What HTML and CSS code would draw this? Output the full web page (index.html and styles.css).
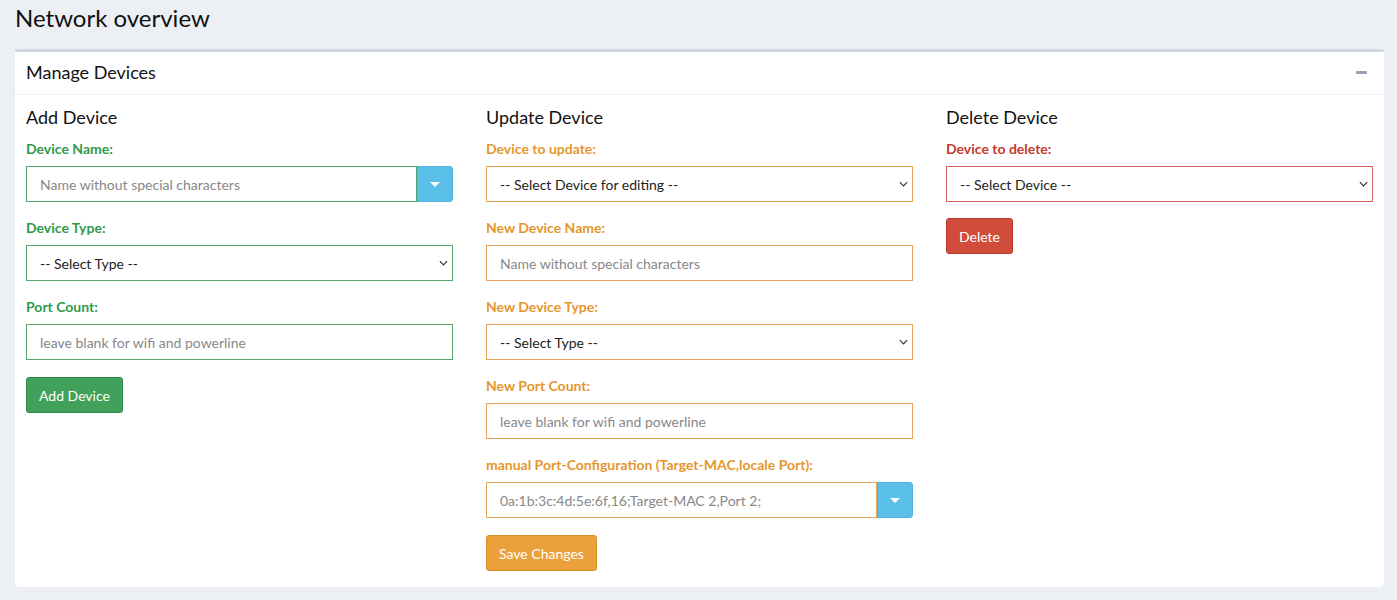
FILE: index.html
```html
<!DOCTYPE html>
<html>
<head>
<meta charset="utf-8">
<link rel="stylesheet" href="styles.css">
</head>
<body>
<div class="content">
  <h1 class="page-title">Network overview</h1>
  <div class="box">
    <div class="box-header">
      <span class="box-title">Manage Devices</span>
      <span class="collapse-btn"></span>
    </div>
    <div class="box-body">
      <div class="col col-success">
        <h3>Add Device</h3>
        <div class="form-group">
          <label>Device Name:</label>
          <div class="input-group">
            <input class="form-control" type="text" placeholder="Name without special characters">
            <span class="addon"><span class="caret"></span></span>
          </div>
        </div>
        <div class="form-group">
          <label>Device Type:</label>
          <select class="form-control"><option>-- Select Type --</option></select>
        </div>
        <div class="form-group">
          <label>Port Count:</label>
          <input class="form-control" type="text" placeholder="leave blank for wifi and powerline">
        </div>
        <button class="btn btn-success">Add Device</button>
      </div>
      <div class="col col-warning">
        <h3>Update Device</h3>
        <div class="form-group">
          <label>Device to update:</label>
          <select class="form-control"><option>-- Select Device for editing --</option></select>
        </div>
        <div class="form-group">
          <label>New Device Name:</label>
          <input class="form-control" type="text" placeholder="Name without special characters">
        </div>
        <div class="form-group">
          <label>New Device Type:</label>
          <select class="form-control"><option>-- Select Type --</option></select>
        </div>
        <div class="form-group">
          <label>New Port Count:</label>
          <input class="form-control" type="text" placeholder="leave blank for wifi and powerline">
        </div>
        <div class="form-group form-group-last">
          <label>manual Port-Configuration (Target-MAC,locale Port):</label>
          <div class="input-group">
            <input class="form-control" type="text" placeholder="0a:1b:3c:4d:5e:6f,16;Target-MAC 2,Port 2;">
            <span class="addon"><span class="caret"></span></span>
          </div>
        </div>
        <button class="btn btn-warning">Save Changes</button>
      </div>
      <div class="col col-danger">
        <h3>Delete Device</h3>
        <div class="form-group">
          <label>Device to delete:</label>
          <select class="form-control"><option>-- Select Device --</option></select>
        </div>
        <button class="btn btn-danger">Delete</button>
      </div>
    </div>
  </div>
</div>
</body>
</html>
```

FILE: styles.css
```css
* { box-sizing: border-box; }
html, body {
  margin: 0;
  background: #ecf0f5;
  font-family: "Lato", "Open Sans", sans-serif;
  color: #333;
  font-size: 14px;
}
.content {
  padding: 5px 13px 0 15px;
}
.page-title {
  margin: 0 0 18px 0;
  font-size: 24px;
  line-height: 26px;
  font-weight: 400;
  color: #111;
}
.box {
  background: #fff;
  border-top: 3px solid #d2d6de;
  border-radius: 3px;
  box-shadow: 0 1px 1px rgba(0,0,0,0.1);
}
.box-header {
  display: flex;
  align-items: center;
  justify-content: space-between;
  padding: 9px 11px 11px 11px;
  border-bottom: 1px solid #f4f4f4;
}
.box-title {
  font-size: 18px;
  line-height: 22px;
  color: #111;
}
.collapse-btn {
  width: 11px;
  height: 3px;
  background: #97a0b3;
  border-radius: 1px;
  margin-right: 6px;
}
.box-body {
  display: grid;
  grid-template-columns: 1fr 1fr 1fr;
  column-gap: 33px;
  padding: 11px 11px 16px 11px;
  align-items: start;
}
.col h3 {
  margin: 0 0 11px 0;
  font-size: 18px;
  line-height: 22px;
  font-weight: 400;
  color: #111;
}
.form-group {
  margin-bottom: 16px;
}
.form-group-last {
  margin-top: 1px;
  margin-bottom: 17px;
}
.form-group label {
  display: block;
  font-weight: 700;
  font-size: 14px;
  line-height: 20px;
  margin-bottom: 7px;
}
.form-control {
  display: block;
  width: 100%;
  height: 36px;
  padding: 0 13px;
  font-family: inherit;
  font-size: 14px;
  color: #222;
  background: #fff;
  border: 1px solid #ccc;
  border-radius: 0;
  outline: none;
}
.form-control::placeholder {
  color: #888;
}
select.form-control {
  appearance: none;
  -webkit-appearance: none;
  background-image: url("data:image/svg+xml;utf8,<svg xmlns='http://www.w3.org/2000/svg' width='10' height='6' viewBox='0 0 10 6'><path d='M1 1l4 4 4-4' fill='none' stroke='%23333' stroke-width='1.3'/></svg>");
  background-repeat: no-repeat;
  background-position: right 4px center;
  background-size: 9px 6px;
}
.input-group {
  display: flex;
}
.input-group .form-control {
  flex: 1;
  min-width: 0;
}
.addon {
  flex: 0 0 36px;
  height: 36px;
  background: #5bc0e9;
  border: 1px solid #4db3dc;
  border-radius: 0 3px 3px 0;
  display: flex;
  align-items: center;
  justify-content: center;
}
.caret {
  width: 0;
  height: 0;
  border-left: 5px solid transparent;
  border-right: 5px solid transparent;
  border-top: 5px solid #fff;
}
.btn {
  display: inline-block;
  height: 36px;
  padding: 0 12px;
  font-family: inherit;
  font-size: 14px;
  color: #fff;
  border-radius: 3px;
  border: 1px solid transparent;
  cursor: pointer;
}
.col-success .btn { margin-top: 1px; }
.btn-success { background: #41a05a; border-color: #2e8a47; }
.btn-warning { background: #eaa03b; border-color: #d98e26; }
.btn-danger { background: #d14c3b; border-color: #b9382a; }

.col-success label { color: #2f9a49; }
.col-success .form-control { border-color: #5aa66a; }
.col-warning label { color: #e5962d; }
.col-warning .form-control { border-color: #e8a458; }
.col-danger label { color: #c43a2c; }
.col-danger .form-control { border-color: #d9655a; }
```
